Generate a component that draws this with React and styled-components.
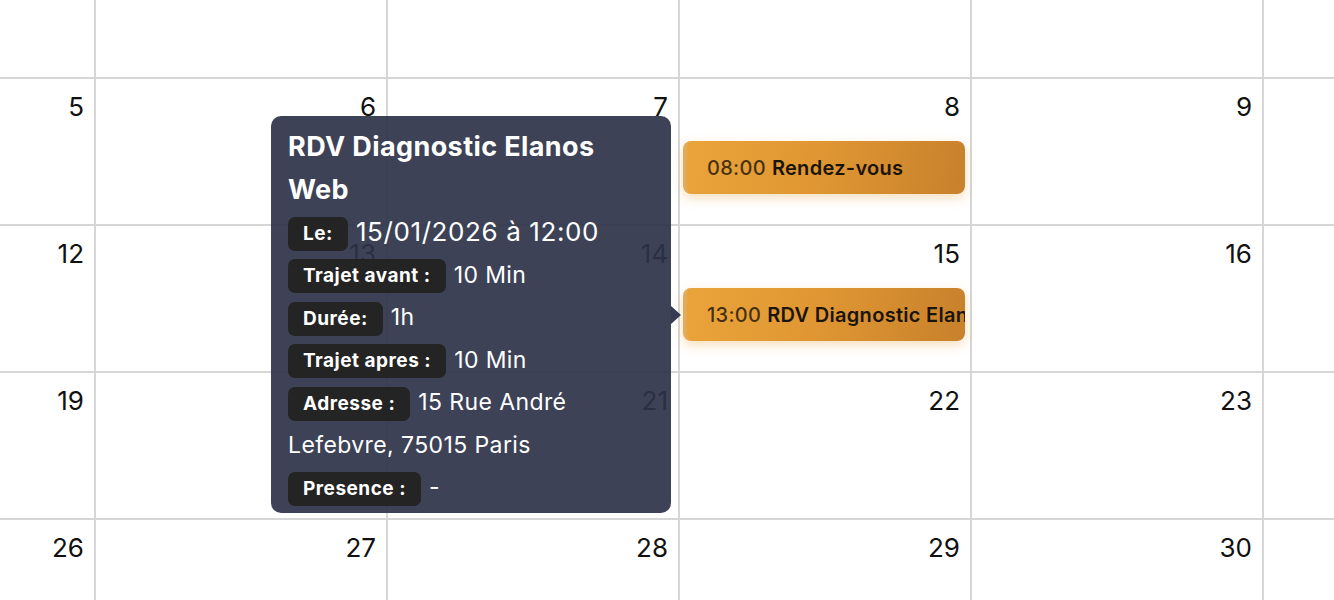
import styled, { createGlobalStyle } from "styled-components";

const GlobalStyle = createGlobalStyle`
  html, body {
    margin: 0;
    padding: 0;
    background: #ffffff;
  }
  body {
    font-family: Inter, "Noto Sans", sans-serif;
  }
`;

const Viewport = styled.div`
  position: relative;
  width: 1334px;
  height: 600px;
  overflow: hidden;
  background: #ffffff;
`;

const MonthGrid = styled.div`
  display: grid;
  grid-template-columns: repeat(7, 290px);
  grid-auto-rows: 145px;
  gap: 2px;
  width: max-content;
  background: #d6d6d6;
  /* current scroll position of the month view */
  margin: -68px 0 0 -196px;
`;

const DayCell = styled.div`
  background: #ffffff;
  display: flex;
  flex-direction: column;
  padding: 12px 5px 0 3px;
  min-width: 0;
`;

const DayNumber = styled.div`
  align-self: flex-end;
  padding-right: 5px;
  font-family: Inter, sans-serif;
  font-size: 26px;
  line-height: 31px;
  color: #111111;
`;

const EventBar = styled.div`
  margin-top: 19px;
  height: 53px;
  display: flex;
  align-items: center;
  padding-left: 20px;
  border-radius: 8px;
  border-left: 4px solid #e2ab58;
  background: linear-gradient(100deg, #eaa43a 0%, #e09733 45%, #c8812c 100%);
  box-shadow: 0 4px 12px rgba(232, 160, 60, 0.35);
  overflow: hidden;
  white-space: nowrap;
  font-family: Inter, sans-serif;
  font-size: 20px;
  letter-spacing: 0.3px;
  color: #1a1409;
`;

const EventTime = styled.span`
  font-weight: 500;
  color: rgba(30, 22, 8, 0.82);
  margin-right: 6px;
`;

const EventTitle = styled.span`
  font-weight: 600;
`;

const Tooltip = styled.div`
  position: absolute;
  left: 271px;
  top: 116px;
  width: 400px;
  box-sizing: border-box;
  padding: 10px 17px 4px;
  border-radius: 10px;
  background: rgba(44, 50, 72, 0.92);
  color: #ffffff;
  font-family: Inter, "Noto Sans", sans-serif;
  line-height: 42.5px;
`;

const Arrow = styled.div`
  position: absolute;
  right: -10px;
  top: 190px;
  width: 0;
  height: 0;
  border-top: 9px solid transparent;
  border-bottom: 9px solid transparent;
  border-left: 10px solid #343b52;
`;

const TooltipTitle = styled.div`
  font-size: 27px;
  font-weight: 700;
  letter-spacing: 0.4px;
`;

const InfoRow = styled.div`
  font-size: ${(p) => (p.$large ? "26px" : "23px")};
  letter-spacing: ${(p) => (p.$large ? "0.6px" : "0.4px")};
`;

const Label = styled.span`
  display: inline-block;
  vertical-align: middle;
  height: 34px;
  line-height: 34px;
  padding: 0 15px;
  margin-right: 8px;
  border-radius: 7px;
  background: #242424;
  font-size: 19px;
  font-weight: 700;
  letter-spacing: 0.5px;
`;

const weeks = [
  [29, 30, 31, 1, 2, 3, 4],
  [5, 6, 7, 8, 9, 10, 11],
  [12, 13, 14, 15, 16, 17, 18],
  [19, 20, 21, 22, 23, 24, 25],
  [26, 27, 28, 29, 30, 31, 1],
];

const events = {
  8: { time: "08:00", title: "Rendez-vous" },
  15: { time: "13:00", title: "RDV Diagnostic Elanos Web" },
};

const details = [
  { label: "Le:", value: "15/01/2026 à 12:00", large: true },
  { label: "Trajet avant :", value: "10 Min" },
  { label: "Durée:", value: "1h" },
  { label: "Trajet apres :", value: "10 Min" },
  { label: "Adresse :", value: "15 Rue André Lefebvre, 75015 Paris" },
  { label: "Presence :", value: "-" },
];

export default function App() {
  return (
    <>
      <GlobalStyle />
      <Viewport>
        <MonthGrid>
          {weeks.map((week, w) =>
            week.map((day, d) => {
              const ev = w > 0 && w < 4 ? events[day] : null;
              return (
                <DayCell key={`${w}-${d}`}>
                  <DayNumber>{day}</DayNumber>
                  {ev && (
                    <EventBar>
                      <EventTime>{ev.time}</EventTime>
                      <EventTitle>{ev.title}</EventTitle>
                    </EventBar>
                  )}
                </DayCell>
              );
            })
          )}
        </MonthGrid>

        <Tooltip>
          <Arrow />
          <TooltipTitle>RDV Diagnostic Elanos Web</TooltipTitle>
          {details.map((item) => (
            <InfoRow key={item.label} $large={item.large}>
              <Label>{item.label}</Label>
              {item.value}
            </InfoRow>
          ))}
        </Tooltip>
      </Viewport>
    </>
  );
}
